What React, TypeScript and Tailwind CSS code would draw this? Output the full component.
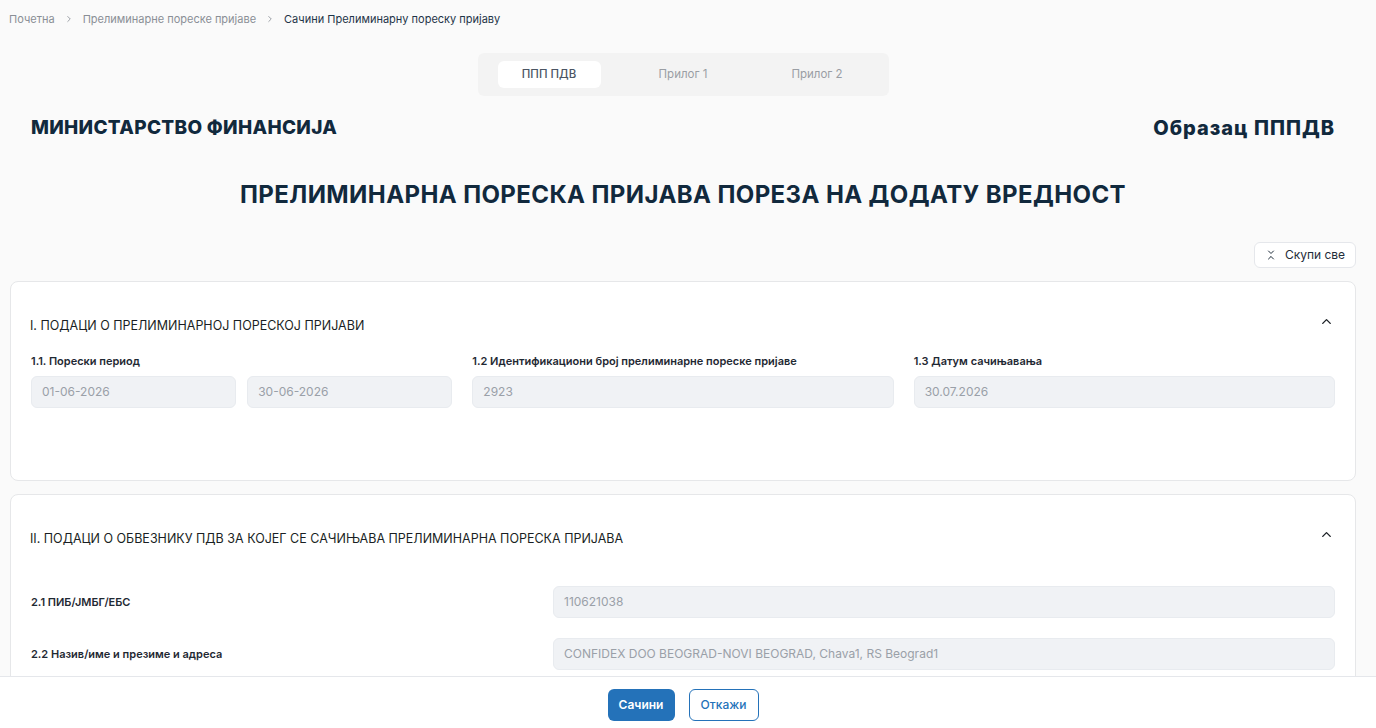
import React from "react";
import { ChevronRight, ChevronUp, ChevronsDownUp } from "lucide-react";

const font = { fontFamily: "Inter, 'Noto Sans', sans-serif" };

function Field({ value, className = "" }: { value: string; className?: string }) {
  return (
    <div className={`h-8 rounded-md bg-[#f0f2f5] border border-[#e8ebef] flex items-center px-[10px] text-[12px] text-[#9aa0a8] ${className}`}>
      {value}
    </div>
  );
}

export default function App() {
  return (
    <div className="h-screen flex flex-col bg-[#fafafa] overflow-hidden" style={font}>
      <div className="flex-1 overflow-hidden w-[1366px]">
        <div className="flex items-center gap-[9px] pl-[9px] pt-[12px] text-[11px] leading-[14px]">
          <span className="text-[#8a8f96]">Почетна</span>
          <ChevronRight size={10} className="text-[#8a8f96]" />
          <span className="text-[#8a8f96]">Прелиминарне пореске пријаве</span>
          <ChevronRight size={10} className="text-[#8a8f96]" />
          <span className="text-[#1e3448]">Сачини Прелиминарну пореску пријаву</span>
        </div>

        <div className="flex justify-center mt-[27px]">
          <div className="flex gap-[31px] px-5 py-2 rounded-md bg-[#f3f3f3] h-[43px] items-center">
            <div className="w-[103px] h-[27px] rounded-md bg-white flex items-center justify-center text-[11.5px] text-[#4b5563] font-medium">ППП ПДВ</div>
            <div className="w-[103px] h-[27px] flex items-center justify-center text-[11.5px] text-[#9a9ea4]">Прилог 1</div>
            <div className="w-[103px] h-[27px] flex items-center justify-center text-[11.5px] text-[#9a9ea4]">Прилог 2</div>
          </div>
        </div>

        <div className="flex justify-between items-center pl-[31px] pr-[31px] mt-[19px]">
          <div className="text-[19px] font-extrabold text-[#11293d] leading-[26px] tracking-[0.3px]">МИНИСТАРСТВО ФИНАНСИЈА</div>
          <div className="text-[20px] font-extrabold text-[#11293d] leading-[26px] tracking-[1px]">Образац ПППДВ</div>
        </div>

        <div className="text-center text-[24px] font-bold tracking-[0.4px] text-[#11293d] mt-[38px] leading-[32px]">
          ПРЕЛИМИНАРНА ПОРЕСКА ПРИЈАВА ПОРЕЗА НА ДОДАТУ ВРЕДНОСТ
        </div>

        <div className="flex justify-end pr-[10px] mt-[31px]">
          <button className="h-[26px] w-[102px] justify-center flex items-center gap-[8px] bg-white border border-[#e5e7eb] rounded-md text-[12px] text-[#1f2d3a]">
            <ChevronsDownUp size={12} strokeWidth={2} />
            Скупи све
          </button>
        </div>

        <div className="mx-[10px] mt-[13px] bg-white border border-[#e6e7e9] rounded-lg px-[20px] pt-[35px] h-[200px]">
          <div className="flex justify-between items-center">
            <div className="text-[12.5px] text-[#1a1f24] -ml-[1px]">I. ПОДАЦИ О ПРЕЛИМИНАРНОЈ ПОРЕСКОЈ ПРИЈАВИ</div>
            <ChevronUp size={15} strokeWidth={2.2} className="text-[#1a1f24] mr-[1px] -mt-[10px]" />
          </div>
          <div className="grid grid-cols-3 gap-[20px] mt-[18px]">
            <div>
              <div className="text-[11px] font-semibold text-[#1f2933] mb-[8px] leading-[14px]">1.1. Порески период</div>
              <div className="grid grid-cols-2 gap-[11px]">
                <Field value="01-06-2026" />
                <Field value="30-06-2026" />
              </div>
            </div>
            <div>
              <div className="text-[11px] font-semibold text-[#1f2933] mb-[8px] leading-[14px]">1.2 Идентификациони број прелиминарне пореске пријаве</div>
              <Field value="2923" />
            </div>
            <div>
              <div className="text-[11px] font-semibold text-[#1f2933] mb-[8px] leading-[14px]">1.3 Датум сачињавања</div>
              <Field value="30.07.2026" />
            </div>
          </div>
        </div>

        <div className="mx-[10px] mt-[13px] bg-white border border-[#e6e7e9] rounded-lg px-[20px] pt-[35px] pb-[60px]">
          <div className="flex justify-between items-center">
            <div className="text-[12.5px] text-[#1a1f24] -ml-[1px]">II. ПОДАЦИ О ОБВЕЗНИКУ ПДВ ЗА КОЈЕГ СЕ САЧИЊАВА ПРЕЛИМИНАРНА ПОРЕСКА ПРИЈАВА</div>
            <ChevronUp size={15} strokeWidth={2.2} className="text-[#1a1f24] mr-[1px] -mt-[10px]" />
          </div>
          <div className="mt-[37px] flex flex-col gap-[20px]">
            <div className="grid grid-cols-[522px_1fr] items-center">
              <div className="text-[11px] font-semibold text-[#1f2933]">2.1 ПИБ/ЈМБГ/ЕБС</div>
              <Field value="110621038" />
            </div>
            <div className="grid grid-cols-[522px_1fr] items-center">
              <div className="text-[11px] font-semibold text-[#1f2933]">2.2 Назив/име и презиме и адреса</div>
              <Field value="CONFIDEX DOO BEOGRAD-NOVI BEOGRAD, Chava1, RS Beograd1" />
            </div>
          </div>
        </div>
      </div>

      <div className="h-[52px] shrink-0 bg-white border-t border-[#e5e7eb]">
        <div className="w-[1366px] flex items-start pt-[12px] justify-center gap-[14px]">
          <button className="h-[32px] w-[67px] rounded-md bg-[#2472b9] text-white text-[12px] font-semibold">Сачини</button>
          <button className="h-[32px] w-[70px] rounded-md bg-white border border-[#2472b9] text-[#2472b9] text-[12px] font-medium">Откажи</button>
        </div>
      </div>
    </div>
  );
}
